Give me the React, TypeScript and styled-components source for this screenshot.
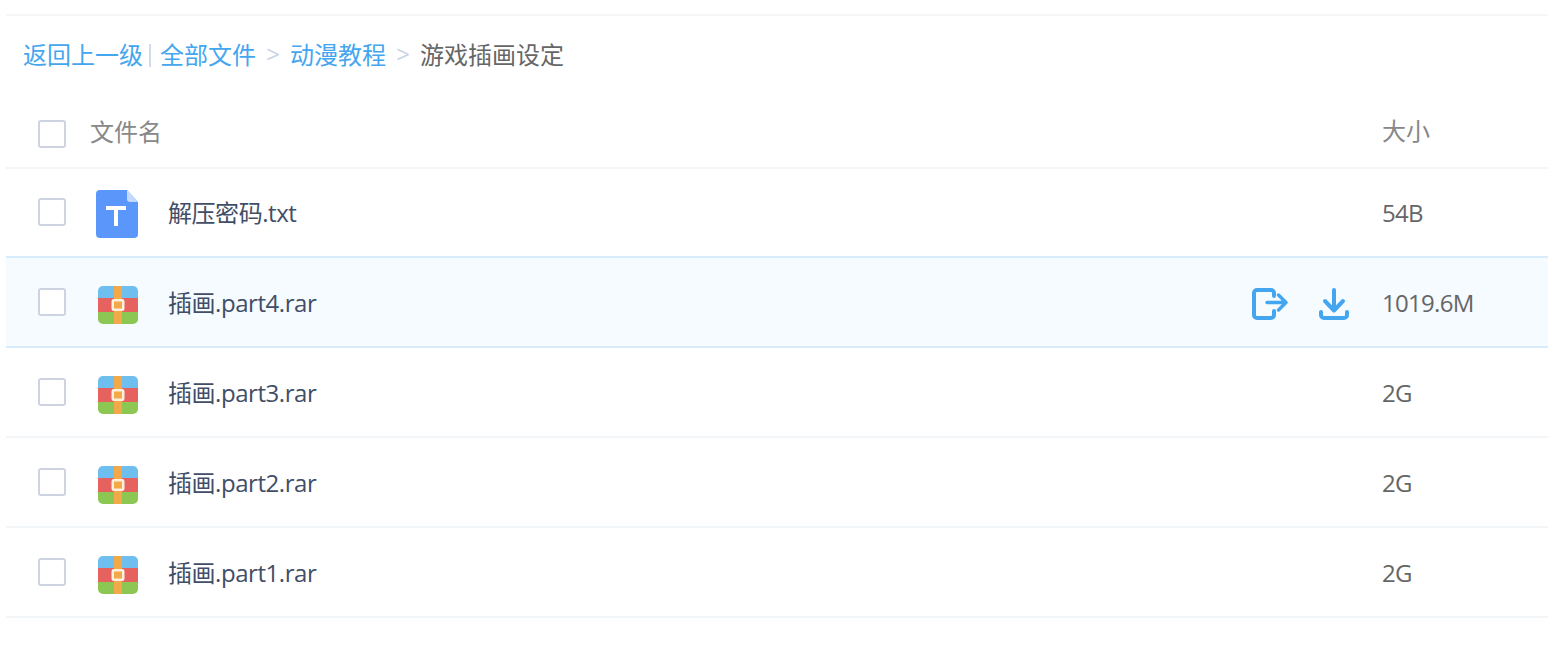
import * as React from "react";
import styled, { createGlobalStyle, css } from "styled-components";

const GlobalStyle = createGlobalStyle`
  html, body {
    margin: 0;
    padding: 0;
    background: #fff;
    font-family: "Open Sans", "Noto Sans CJK SC", sans-serif;
  }
`;

const Page = styled.div`
  width: 1548px;
  height: 660px;
  padding: 14px 0 0 6px;
  box-sizing: border-box;
  overflow: hidden;
`;

const Breadcrumb = styled.div`
  display: flex;
  align-items: center;
  height: 82px;
  padding: 0 0 5px 17px;
  border-top: 2px solid #f5f6f8;
  font-size: 24px;
  color: #666;
  white-space: nowrap;
  box-sizing: border-box;
`;

const Crumb = styled.a`
  color: #45a6f0;
`;

const Divider = styled.span`
  width: 2px;
  height: 23px;
  margin: 3px 9px 0 6px;
  background: #cfdcec;
`;

const Chevron = styled.span`
  width: 34px;
  text-align: center;
  color: #c8d3e6;
  font-size: 24px;
`;

const Check = styled.span<{ $header?: boolean }>`
  flex: none;
  width: 24px;
  height: 24px;
  margin-left: 32px;
  margin-top: ${p => (p.$header ? "6px" : "0")};
  border: 2px solid #cdd3e1;
  border-radius: 3px;
  background: #fff;
`;

const IconSlot = styled.div`
  flex: none;
  width: 43px;
  height: 50px;
  margin: 6px 0 0 29px;
  display: flex;
  align-items: center;
  justify-content: flex-end;
`;

const Row = styled.div<{ $active?: boolean; $first?: boolean }>`
  display: flex;
  align-items: center;
  height: ${p => (p.$first ? "89px" : "90px")};
  box-sizing: border-box;
  border-bottom: 2px solid ${p => (p.$active ? "#d9ecfc" : "#f3f6f9")};
  background: ${p => (p.$active ? "#f5fbff" : "#fff")};
  ${p => p.$active && "margin-top: -2px; height: 92px; border-top: 2px solid #d9ecfc;"}
  ${p =>
    p.$first &&
    css`
      ${Check} {
        margin-top: -2px;
      }
      ${IconSlot} {
        margin-top: 4px;
      }
    `}
`;

const HeaderRow = styled(Row)`
  height: 73px;
  padding-bottom: 2px;
`;

const HeaderName = styled.div`
  flex: 1;
  margin-left: 24px;
  font-size: 24px;
  color: #888;
`;

const FileName = styled.div`
  flex: 1;
  margin: 0 0 2px 30px;
  font-size: 24px;
  letter-spacing: -0.45px;
  color: #424e67;
`;

const Actions = styled.div`
  display: flex;
  align-items: center;
  gap: 31px;
  margin: 4px 33px 0 0;
`;

const Size = styled.div<{ $header?: boolean }>`
  flex: none;
  width: 166px;
  margin-bottom: ${p => (p.$header ? "2px" : "0")};
  font-size: 24px;
  letter-spacing: ${p => (p.$header ? "0" : "-0.7px")};
  color: ${p => (p.$header ? "#888" : "#666")};
`;

const TextFileIcon = () => (
  <svg width="42" height="50" viewBox="0 0 42 50">
    <path d="M4 0h27l11 12v32a4 4 0 0 1-4 4H4a4 4 0 0 1-4-4V4a4 4 0 0 1 4-4z" fill="#5b97fb" />
    <path d="M31 0l11 12h-8a3 3 0 0 1-3-3z" fill="#c3d9fd" />
    <path d="M10 16h20v4h-8v16h-4V20h-8z" fill="#fff" />
  </svg>
);

const RarIcon = () => (
  <svg width="40" height="40" viewBox="0 0 40 40">
    <defs>
      <clipPath id="rar-clip">
        <rect width="40" height="38" y="1" rx="5" />
      </clipPath>
    </defs>
    <g clipPath="url(#rar-clip)">
      <rect width="40" height="12" y="1" fill="#6ebff0" />
      <rect width="40" height="14" y="13" fill="#e5625e" />
      <rect width="40" height="12" y="27" fill="#8cc653" />
      <rect width="8" height="38" x="16" y="1" fill="#f1a94a" />
    </g>
    <rect x="14.75" y="15.25" width="10.5" height="9.5" rx="1" fill="#f1a94a" stroke="#fdf0dc" strokeWidth="2.5" />
  </svg>
);

const MoveIcon = () => (
  <svg width="36" height="32" viewBox="0 0 36 32" fill="none" stroke="#45a6f0" strokeWidth="4" strokeLinecap="round" strokeLinejoin="round">
    <path d="M22 8V5a3 3 0 0 0-3-3H5a3 3 0 0 0-3 3v22a3 3 0 0 0 3 3h14a3 3 0 0 0 3-3v-4" />
    <path d="M15 14.5h18M26.5 7l7.5 7.5-7.5 7.5" strokeWidth="3.4" />
  </svg>
);

const DownloadIcon = () => (
  <svg width="30" height="32" viewBox="0 0 30 32" fill="none" stroke="#45a6f0" strokeLinecap="round" strokeLinejoin="round">
    <path d="M15 2v20M6 13l9 9.5 9-9.5" strokeWidth="4" />
    <path d="M2 24v3a3 3 0 0 0 3 3h20a3 3 0 0 0 3-3v-3" strokeWidth="4" />
  </svg>
);

const files = [
  { name: "解压密码.txt", size: "54B", kind: "txt" },
  { name: "插画.part4.rar", size: "1019.6M", kind: "rar", active: true },
  { name: "插画.part3.rar", size: "2G", kind: "rar" },
  { name: "插画.part2.rar", size: "2G", kind: "rar" },
  { name: "插画.part1.rar", size: "2G", kind: "rar" }
];

export default function App() {
  return (
    <Page>
      <GlobalStyle />
      <Breadcrumb>
        <Crumb>返回上一级</Crumb>
        <Divider />
        <Crumb>全部文件</Crumb>
        <Chevron>&gt;</Chevron>
        <Crumb>动漫教程</Crumb>
        <Chevron>&gt;</Chevron>
        <span>游戏插画设定</span>
      </Breadcrumb>
      <HeaderRow>
        <Check $header />
        <HeaderName>文件名</HeaderName>
        <Size $header>大小</Size>
      </HeaderRow>
      {files.map((f, i) => (
        <Row key={f.name} $active={f.active} $first={i === 0}>
          <Check />
          <IconSlot>{f.kind === "txt" ? <TextFileIcon /> : <RarIcon />}</IconSlot>
          <FileName>{f.name}</FileName>
          {f.active && (
            <Actions>
              <MoveIcon />
              <DownloadIcon />
            </Actions>
          )}
          <Size>{f.size}</Size>
        </Row>
      ))}
    </Page>
  );
}
